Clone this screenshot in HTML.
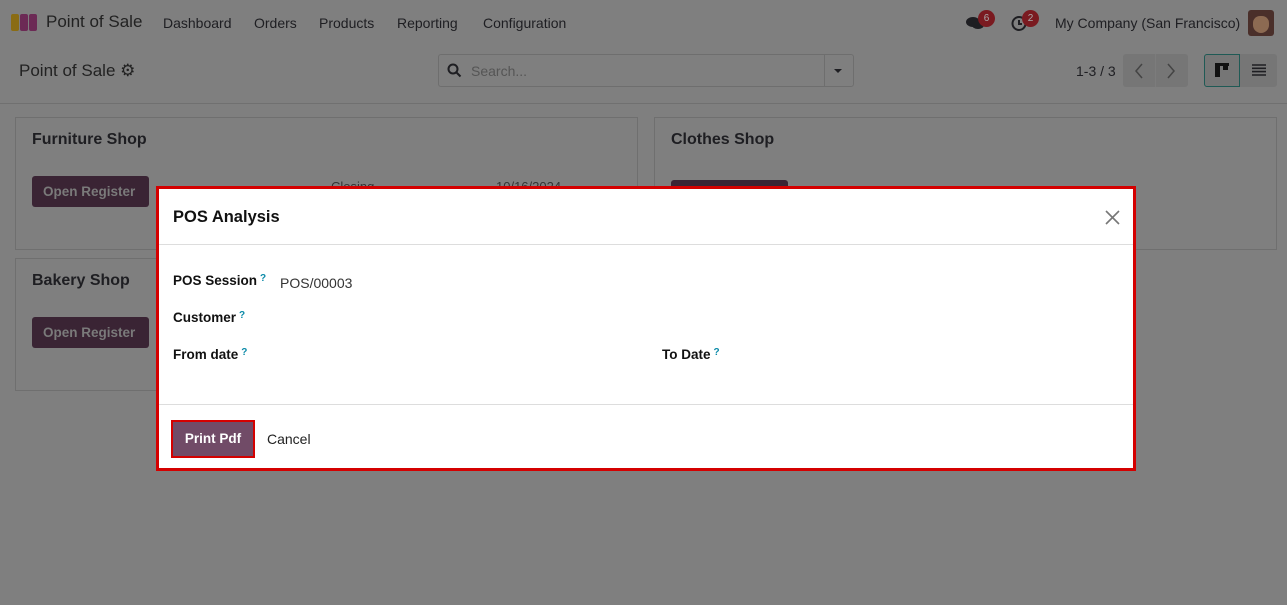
<!DOCTYPE html>
<html><head><style>
*{box-sizing:border-box;margin:0;padding:0}
body{width:1287px;height:605px;overflow:hidden;background:#7f7f7f;font-family:"Liberation Sans","DejaVu Sans",sans-serif;color:#1e1e22;position:relative}
.a{position:absolute;white-space:nowrap}
.card{position:absolute;border:1px solid #6f6f6f;background:#7f7f7f}
.card h3{position:absolute;left:16px;top:13px;font-size:16px;font-weight:bold;color:#1e1e22}
.btn{position:absolute;background:#3a2434;color:#7a7a7a;border-radius:3px;font-size:13.5px;font-weight:bold;padding:8px 11px}
.lbl{position:absolute;font-size:13.5px;font-weight:bold;color:#111}
.q{color:#0b8aa8;font-size:10px;vertical-align:top;margin-left:3px}
</style></head><body>
<svg class="a" style="left:11px;top:14px" width="27" height="18" viewBox="0 0 27 18"><rect x="0" y="0" width="8" height="17" rx="2" fill="#8a6c14"/><rect x="9" y="0" width="8" height="17" rx="2" fill="#6c2a55"/><rect x="18" y="0" width="8" height="17" rx="2" fill="#6c2a55"/></svg>
<div class="a" style="left:46px;top:12px;font-size:17px;color:#222">Point of Sale</div>
<div class="a" style="left:163px;top:15px;font-size:14px;color:#1e1e22">Dashboard</div>
<div class="a" style="left:254px;top:15px;font-size:14px">Orders</div>
<div class="a" style="left:319px;top:15px;font-size:14px">Products</div>
<div class="a" style="left:397px;top:15px;font-size:14px">Reporting</div>
<div class="a" style="left:483px;top:15px;font-size:14px">Configuration</div>
<svg class="a" style="left:965px;top:15px" width="20" height="16" viewBox="0 0 20 16"><ellipse cx="8" cy="7" rx="7" ry="5" fill="#1e1e22"/><ellipse cx="13" cy="10" rx="6" ry="4" fill="#1e1e22"/></svg>
<div class="a" style="left:978px;top:10px;width:17px;height:17px;border-radius:50%;background:#7a1a20;color:#aaa;font-size:10px;text-align:center;line-height:17px">6</div>
<svg class="a" style="left:1011px;top:15px" width="17" height="17" viewBox="0 0 17 17"><circle cx="8" cy="8.5" r="6.5" fill="none" stroke="#1e1e22" stroke-width="2"/><path d="M8 5v4h3" stroke="#1e1e22" stroke-width="2" fill="none"/></svg>
<div class="a" style="left:1022px;top:10px;width:17px;height:17px;border-radius:50%;background:#7a1a20;color:#aaa;font-size:10px;text-align:center;line-height:17px">2</div>
<div class="a" style="left:1055px;top:15px;font-size:14px">My Company (San Francisco)</div>
<div class="a" style="left:1248px;top:10px;width:26px;height:26px;border-radius:3px;background:#4a2f2a"><div style="margin:6px auto 0;width:16px;height:17px;border-radius:7px 7px 8px 8px;background:#8c6a52"></div></div>
<div class="a" style="left:19px;top:61px;font-size:17px;color:#222">Point of Sale ⚙</div>
<div class="a" style="left:438px;top:54px;width:416px;height:33px;border:1px solid #6e6e6e;border-radius:3px"></div>
<svg class="a" style="left:447px;top:63px" width="15" height="15" viewBox="0 0 15 15"><circle cx="6" cy="6" r="4.5" fill="none" stroke="#1e1e22" stroke-width="2"/><path d="M9.5 9.5l4 4" stroke="#1e1e22" stroke-width="2"/></svg>
<div class="a" style="left:471px;top:63px;font-size:14px;color:#555">Search...</div>
<div class="a" style="left:824px;top:55px;width:1px;height:31px;background:#6e6e6e"></div>
<div class="a" style="left:834px;top:69px;border-left:4px solid transparent;border-right:4px solid transparent;border-top:4px solid #1e1e22"></div>
<div class="a" style="left:1076px;top:63px;font-size:14px">1-3 / 3</div>
<div class="a" style="left:1123px;top:54px;width:65px;height:33px;background:#767676;border-radius:3px"></div>
<div class="a" style="left:1155px;top:54px;width:1px;height:33px;background:#7c7c7c"></div>
<svg class="a" style="left:1134px;top:63px" width="10" height="16" viewBox="0 0 10 16"><path d="M8 1L2 8l6 7" fill="none" stroke="#444" stroke-width="1.5"/></svg>
<svg class="a" style="left:1166px;top:63px" width="10" height="16" viewBox="0 0 10 16"><path d="M2 1l6 7-6 7" fill="none" stroke="#444" stroke-width="1.5"/></svg>
<div class="a" style="left:1204px;top:54px;width:73px;height:33px;background:#767676;border-radius:3px"></div>
<div class="a" style="left:1204px;top:54px;width:36px;height:33px;border:1px solid #1f5a55;border-radius:3px 0 0 3px"></div>
<svg class="a" style="left:1215px;top:63px" width="14" height="14" viewBox="0 0 14 14"><rect x="0" y="0" width="14" height="3" fill="#111"/><rect x="0" y="0" width="5" height="14" fill="#111"/><rect x="8" y="0" width="5" height="7" fill="#111"/></svg>
<svg class="a" style="left:1252px;top:64px" width="14" height="12" viewBox="0 0 14 12"><path d="M0 1h14M0 4.3h14M0 7.6h14M0 11h14" stroke="#1e1e22" stroke-width="1.6"/></svg>
<div class="a" style="left:0;top:103px;width:1287px;height:1px;background:#707070"></div>
<div class="card" style="left:15px;top:117px;width:623px;height:133px"><h3>Furniture Shop</h3><div class="btn" style="left:16px;top:58px;width:117px">Open Register</div>
<div class="a" style="left:315px;top:61px;font-size:13px;color:#333">Closing</div><div class="a" style="left:480px;top:61px;font-size:13px;color:#333">10/16/2024</div></div>
<div class="card" style="left:654px;top:117px;width:623px;height:133px"><h3>Clothes Shop</h3><div class="btn" style="left:16px;top:62px;width:117px;height:30px"></div></div>
<div class="card" style="left:15px;top:258px;width:623px;height:133px"><h3>Bakery Shop</h3><div class="btn" style="left:16px;top:58px;width:117px">Open Register</div></div>
<div class="a" style="left:156px;top:186px;width:980px;height:285px;background:#fff;border:3px solid #d40000">
 <div class="a" style="left:14px;top:19px;font-size:16.5px;font-weight:bold;color:#111">POS Analysis</div>
 <svg class="a" style="left:946px;top:21px" width="15" height="15" viewBox="0 0 15 15"><path d="M1 1l13 13M14 1L1 14" stroke="#777" stroke-width="1.6"/></svg>
 <div class="a" style="left:0;top:55px;width:974px;height:1px;background:#ddd"></div>
 <div class="lbl" style="left:14px;top:84px">POS Session<span class="q">?</span></div>
 <div class="a" style="left:121px;top:86px;font-size:14px;color:#333">POS/00003</div>
 <div class="lbl" style="left:14px;top:121px">Customer<span class="q">?</span></div>
 <div class="lbl" style="left:14px;top:158px">From date<span class="q">?</span></div>
 <div class="lbl" style="left:503px;top:158px">To Date<span class="q">?</span></div>
 <div class="a" style="left:0;top:215px;width:974px;height:1px;background:#ddd"></div>
 <div class="a" style="left:12px;top:231px;width:84px;height:38px;border:2px solid #d40000;background:#714b67;color:#fff;font-size:13.5px;font-weight:bold;text-align:center;line-height:33px">Print Pdf</div>
 <div class="a" style="left:108px;top:242px;font-size:14px;color:#222">Cancel</div>
</div>
</body></html>
